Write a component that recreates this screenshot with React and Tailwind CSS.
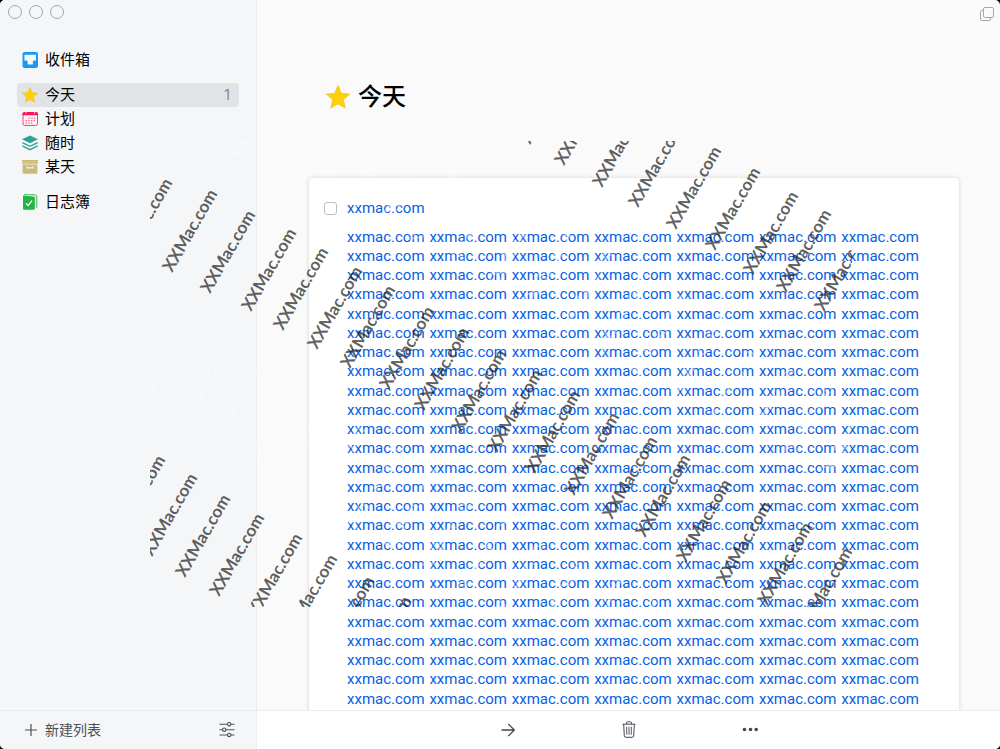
import { useState } from "react";

const MENU = [
  [{ id: "inbox", name: "收件箱", Icon: InboxIcon }],
  [
    { id: "today", name: "今天", Icon: StarIcon, count: 1 },
    { id: "upcoming", name: "计划", Icon: CalendarIcon },
    { id: "anytime", name: "随时", Icon: LayersIcon },
    { id: "someday", name: "某天", Icon: BoxIcon },
  ],
  [{ id: "logbook", name: "日志簿", Icon: LogbookIcon }],
];

// notes: blocks of lines, every line holds seven links
const BLOCKS = [4, 4, 4, 4, 4, 4, 1];
const LINKS = [0, 1, 2, 3, 4, 5, 6];

// baseline start of every stamp
const DARK_MARKS = [
  [127, 262], [172, 273], [210, 294], [251, 312], [283, 331], [317, 350], [350, 369],
  [389, 390], [424, 411], [461, 433], [497, 453], [535, 474], [574, 496], [612, 520],
  [645, 538], [686, 563], [726, 585], [767, 606], [807, 631],
  [530, 145], [564, 166], [602, 188], [638, 208], [676, 230], [715, 251], [753, 275],
  [786, 293], [824, 312],
  [120, 539], [152, 557], [185, 578], [219, 597], [257, 617], [292, 638], [329, 660], [366, 680],
];

const LIGHT_MARKS = [
  [240, 160], [284, 173], [325, 188], [356, 209], [387, 228], [418, 246], [457, 270],
  [494, 291], [530, 311], [567, 333], [604, 355], [641, 377], [680, 398], [717, 420],
  [754, 441], [790, 462], [826, 484],
  [143, 414], [183, 431], [215, 448], [250, 469], [284, 488], [320, 509], [357, 530],
  [394, 551], [431, 572], [468, 593], [505, 614], [542, 635], [579, 656], [616, 677],
];

function InboxIcon() {
  return (
    <svg viewBox="0 0 16 16" className="size-4">
      <rect x="0.5" y="0" width="15.5" height="16" rx="2" fill="#159bf5" />
      <path d="M2.500 2.800H14v5.700h-2.300c-.5 0-.8.4-.8.900v3.200H5.600V9.400c0-.5-.3-.9-.8-.9H2.500z" fill="#f4f6f8" />
    </svg>
  );
}

function StarIcon({ className = "size-4" }) {
  return (
    <svg viewBox="0 0 24 24" className={className}>
      <path
        d="M12 .5l3.400 7.800 8.300.8-6.300 5.600 1.900 8.400L12 18.900l-7.300 4.200 1.900-8.400L.3 9.100l8.300-.8z"
        fill="#fdd00b"
        stroke="#e9bd1c"
        strokeWidth="0.6"
        strokeLinejoin="round"
      />
    </svg>
  );
}

function CalendarIcon() {
  return (
    <svg viewBox="0 0 16 16" className="size-4">
      <rect x="1" y="1.500" width="14.500" height="13" rx="1.800" fill="#fdf3f6" stroke="#f5476f" />
      <path d="M.5 4.300V3c0-1.200.8-2 2-2H14c1.200 0 2 .8 2 2v1.300z" fill="#fb1155" />
      <path d="M4 1.200v1.400M12.500 1.200v1.400" stroke="#ffffff" strokeWidth="0.8" />
      <path d="M6.500 7.200h7M3.500 9.700h10M3.500 12.200h7" stroke="#f5678a" strokeWidth="1.200" strokeDasharray="1.400 1.300" />
    </svg>
  );
}

function LayersIcon() {
  return (
    <svg viewBox="0 0 16 16" className="size-4">
      <path d="M8 .4l8 3.900-8 4-8-4z" fill="#30a193" />
      <path d="M.3 7.600L8 11.400l7.700-3.800M.3 10.900L8 14.700l7.700-3.800" fill="none" stroke="#30a193" strokeWidth="1.300" />
    </svg>
  );
}

function BoxIcon() {
  return (
    <svg viewBox="0 0 16 16" className="size-4">
      <rect x="0" y="1" width="16" height="3.800" fill="#c9bb78" />
      <path d="M0 2.900h16" stroke="#ddd4a6" strokeWidth="0.700" />
      <rect x="0.600" y="5.600" width="14.800" height="9.200" rx="0.800" fill="#c9bb78" />
      <path d="M5.200 7.300v1.500h5.600V7.300" fill="none" stroke="#f7f5ea" strokeWidth="1.200" />
    </svg>
  );
}

function LogbookIcon() {
  return (
    <svg viewBox="0 0 16 16" className="size-4">
      <path d="M3 .6h9.700c1.300 0 2.100.8 2.100 2v10.900l-2 .9V3.500L11.500 2z" fill="#d8f1dd" />
      <path d="M2 .7h10.700c1.300 0 2.100.8 2.100 2v10.900" fill="none" stroke="#2db84a" strokeWidth="0.900" />
      <path d="M1 1.400l10.500 1.200c.8.100 1.300.6 1.300 1.400v10.500c0 .8-.5 1.300-1.300 1.300H2.400c-.8 0-1.400-.5-1.400-1.300z" fill="#22b445" />
      <path d="M3.900 9.300l2.200 2.300 3.900-4.900" fill="none" stroke="#ffffff" strokeWidth="1.300" />
    </svg>
  );
}

function Sidebar({ active, onSelect }) {
  return (
    <aside className="flex w-[257px] shrink-0 flex-col border-r border-[#eceef0] bg-[#f4f6f8]">
      <div className="flex gap-[7px] pt-[5px] pl-2">
        {["关闭", "最小化", "缩放"].map((label) => (
          <button key={label} aria-label={label} className="size-[14px] rounded-full border border-[#a4a6a8]" />
        ))}
      </div>

      <nav className="mt-[29px] flex flex-1 flex-col gap-[11px] pr-[17px] pl-[17px]">
        {MENU.map((group, i) => (
          <ul key={i}>
            {group.map(({ id, name, Icon, count }) => (
              <li key={id}>
                <button
                  onClick={() => onSelect(id)}
                  className={`flex h-6 w-full items-center gap-[7px] rounded pr-[9px] pl-[5px] text-[15px] text-black ${
                    active === id ? "bg-[#e0e4e7]" : ""
                  }`}
                >
                  <Icon />
                  <span>{name}</span>
                  {count && <span className="ml-auto text-sm text-[#84888c]">{count}</span>}
                </button>
              </li>
            ))}
          </ul>
        ))}
      </nav>

      <div className="flex h-[39px] items-center justify-between border-t border-[#e9ebed] pr-[21px] pl-6 text-[#4a5058]">
        <button className="flex items-center gap-[7px] text-sm">
          <svg viewBox="0 0 14 14" className="size-[14px]" fill="none" stroke="currentColor" strokeWidth="1.200">
            <path d="M7 1v12M1 7h12" />
          </svg>
          新建列表
        </button>
        <button aria-label="设置">
          <svg viewBox="0 0 16 16" className="size-4" fill="none" stroke="currentColor" strokeWidth="1.100">
            <path d="M.5 2.200h7.800M12 2.200h3.500M.5 7.700h2.800M7 7.700h8.500M.5 13h7.800M12 13h3.500" />
            <circle cx="10.200" cy="2.200" r="1.700" />
            <circle cx="5.200" cy="7.700" r="1.700" />
            <circle cx="10.200" cy="13" r="1.700" />
          </svg>
        </button>
      </div>
    </aside>
  );
}

function Task() {
  const [done, setDone] = useState(false);

  return (
    <article className="mt-[65px] mr-[41px] ml-[52px] rounded bg-white pt-5 pr-10 pb-10 pl-[15px] font-['Roboto',sans-serif] text-[#0560e4] shadow-[0_0_4px_rgba(0,0,0,0.16)]">
      <div className="flex h-5 items-center gap-[10px]">
        <input
          id="task"
          type="checkbox"
          checked={done}
          onChange={() => setDone(!done)}
          className="size-[13px] appearance-none rounded-[3px] border border-[#bcbec0] bg-white checked:bg-[#0b63e0]"
        />
        <label htmlFor="task" className="text-[15px]">
          <a href="#xxmac">xxmac.com</a>
        </label>
      </div>

      <div className="mt-[10px] space-y-px pl-[23px] text-[15px]/[19px]">
        {BLOCKS.map((lines, b) => (
          <div key={b}>
            {Array.from({ length: lines }, (_, l) => (
              <p key={l} className="flex justify-between">
                {LINKS.map((n) => (
                  <a key={n} href="#xxmac">xxmac.com</a>
                ))}
              </p>
            ))}
          </div>
        ))}
      </div>
    </article>
  );
}

function Toolbar() {
  return (
    <footer className="flex h-[39px] shrink-0 items-center justify-center gap-[89px] border-t border-[#ececec] bg-white text-[#42474d]">
      <button aria-label="移动" className="flex w-8 justify-center">
        <svg viewBox="0 0 16 16" className="size-4" fill="none" stroke="currentColor" strokeWidth="1.300">
          <path d="M1.500 8h12.700M8.300 2l6 6-6 6" />
        </svg>
      </button>
      <button aria-label="删除" className="flex w-8 justify-center">
        <svg viewBox="0 0 16 18" className="h-[18px] w-4" fill="none" stroke="currentColor">
          <path d="M1.500 3.200h13M5.500 3V1.900c0-.7.400-1.100 1.100-1.100h2.800c.7 0 1.100.4 1.100 1.100V3M2.700 3.400l.6 11.500c.1.900.6 1.400 1.500 1.400h6.400c.9 0 1.400-.5 1.500-1.400l.6-11.500" />
          <path d="M5.600 5.700l.2 8M8 5.700v8M10.400 5.700l-.2 8" strokeWidth="0.900" />
        </svg>
      </button>
      <button aria-label="更多" className="flex w-8 justify-center">
        <svg viewBox="0 0 16 16" className="size-4" fill="currentColor">
          <circle cx="2.500" cy="7.500" r="1.800" />
          <circle cx="8.500" cy="7.500" r="1.800" />
          <circle cx="14.200" cy="7.500" r="1.800" />
        </svg>
      </button>
    </footer>
  );
}

function Watermark() {
  return (
    <svg
      viewBox="150 141 702 466"
      className="pointer-events-none absolute top-[141px] left-[150px] h-[466px] w-[702px] font-['Lato',sans-serif] text-[17px] font-bold"
    >
      {LIGHT_MARKS.map(([x, y]) => (
        <text key={`${x}-${y}`} transform={`translate(${x} ${y}) rotate(-60)`} fill="#ffffff" fillOpacity="0.4">
          XXMac.com
        </text>
      ))}
      {DARK_MARKS.map(([x, y]) => (
        <text key={`${x}-${y}`} transform={`translate(${x} ${y}) rotate(-60)`} fill="#222222" fillOpacity="0.72">
          XXMac.com
        </text>
      ))}
    </svg>
  );
}

export default function App() {
  const [active, setActive] = useState("today");

  return (
    <div className="h-screen bg-black font-['Inter','Noto_Sans_CJK_SC',sans-serif]">
      <div className="relative flex h-full overflow-hidden rounded-[5px] bg-[#fafafa]">
        <Sidebar active={active} onSelect={setActive} />

        <main className="flex min-w-0 flex-1 flex-col">
          <div className="min-h-0 flex-1 overflow-hidden">
            <div className="flex h-7 justify-end pt-[6px] pr-[5px]">
              <button aria-label="新窗口" className="size-4">
                <svg viewBox="0 0 16 16" className="size-4" fill="#fafafa" stroke="#a2a8ae">
                  <rect x="1.500" y="4.500" width="10" height="10" rx="1.500" />
                  <rect x="4.500" y="1.500" width="10" height="10" rx="1.500" />
                </svg>
              </button>
            </div>
            <div className="mt-[53px] ml-[69px] flex h-8 items-center gap-2">
              <StarIcon className="size-6" />
              <h1 className="text-2xl font-medium text-black">今天</h1>
            </div>
            <Task />
          </div>
          <Toolbar />
        </main>

        <Watermark />
      </div>
    </div>
  );
}
